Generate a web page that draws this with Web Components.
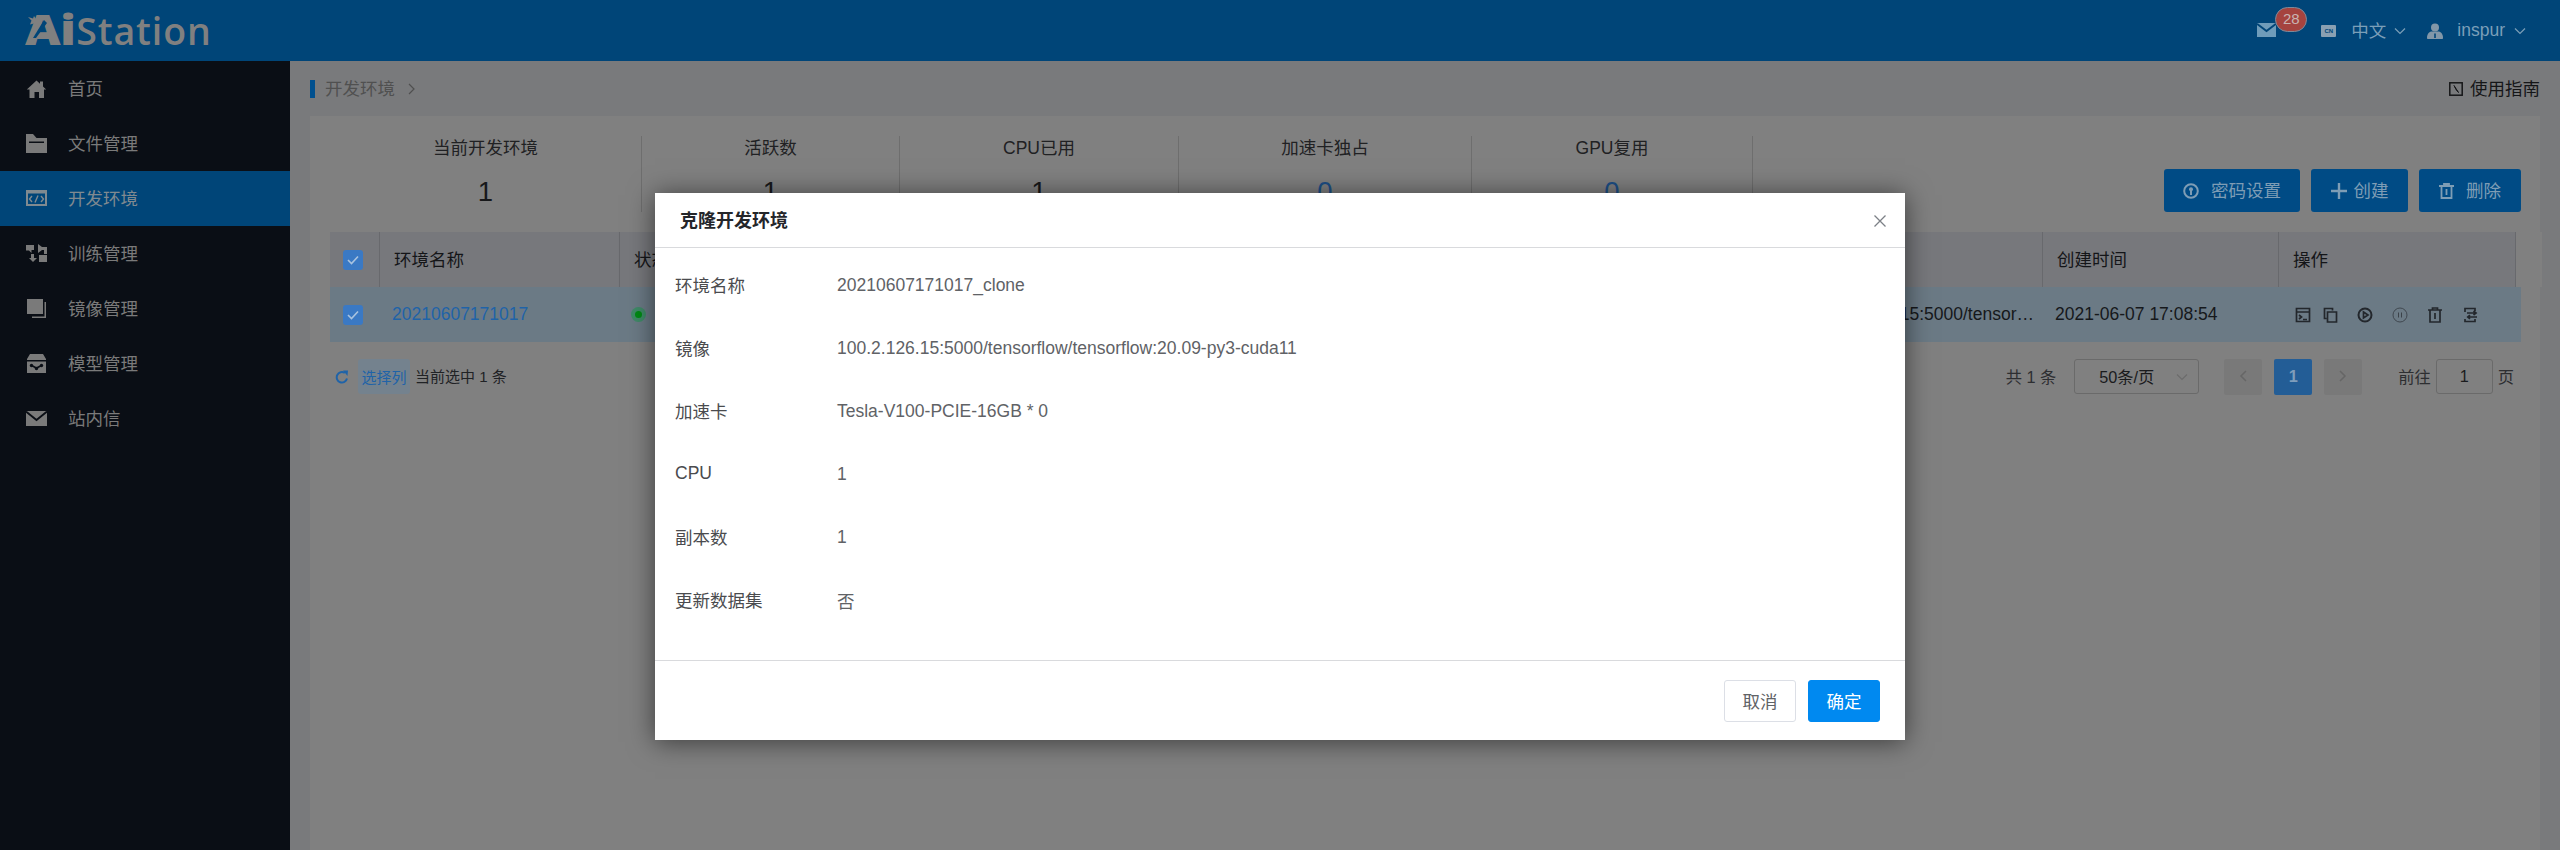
<!DOCTYPE html>
<html lang="zh"><head><meta charset="utf-8"><title>AiStation</title>
<style>
html,body{margin:0;padding:0;height:850px;overflow:hidden;background:#797a7c}
body{font:17.5px "Liberation Sans","Noto Sans CJK SC",sans-serif;color:#1c1d1f}
</style></head><body>
<ai-app></ai-app>
<template id="ic-home"><svg viewBox="0 0 21 21" width="21" height="21"><path fill="currentColor" d="M10.5 2.5 14 5.8V3.5h3v5.1l3.2 3H18V20h-5v-6H8.500v6H3.500v-8.400H.8Z"/></svg></template>
<template id="ic-folder"><svg viewBox="0 0 21 21" width="21" height="21"><path fill="currentColor" d="M0 1h7l3.500 4H21v15H0Z"/><path fill="#0a0e15" d="M3 8.500h15V10H3z"/></svg></template>
<template id="ic-code"><svg viewBox="0 0 21 21" width="21" height="21"><path fill="currentColor" d="M0 2h21v16H0Z"/><path fill="#004578" d="M2 5.500h17V16H2z"/><path fill="none" stroke="currentColor" stroke-width="1.400" d="M6 8 3.500 11 6 14M15 8l2.500 3-2.500 3M12 7.500 9 14.500"/></svg></template>
<template id="ic-train"><svg viewBox="0 0 21 21" width="21" height="21"><path fill="currentColor" d="M0 2h8v5H5.500v3L3 7.500H0ZM12 1l4 3h5v7h-3V7h-2l-4 3ZM13 12h8v7h-8Z"/><path fill="currentColor" d="M5 11h3v4h3l-4 4-4-4h2Z"/></svg></template>
<template id="ic-mirror"><svg viewBox="0 0 21 21" width="21" height="21"><path fill="currentColor" d="M1 1h16v15H1Z"/><path fill="currentColor" d="M18.500 4H20v16H6v-1.500h12.500Z"/></svg></template>
<template id="ic-model"><svg viewBox="0 0 21 21" width="21" height="21"><path fill="currentColor" d="M4 1h13l3 5v14H1V6Z"/><path fill="#0a0e15" d="M1 7h19v1.500H1z"/><path fill="none" stroke="#0a0e15" stroke-width="1.600" d="M5.500 12.500 10.500 15l5-2.500"/><circle cx="5.500" cy="12.500" r="1.700" fill="#0a0e15"/><circle cx="15.500" cy="12.500" r="1.700" fill="#0a0e15"/><circle cx="10.500" cy="15.500" r="1.700" fill="#0a0e15"/></svg></template>
<template id="ic-mail"><svg viewBox="0 0 21 21" width="21" height="21"><path fill="currentColor" d="M0 3h21v15H0Z"/><path fill="none" stroke="#0a0e15" stroke-width="1.800" d="M0 3.500 10.500 12 21 3.500"/></svg></template>

<script>
const $=(h)=>{const t=document.createElement('template');t.innerHTML=h;return t.content};
const ic=(id)=>document.getElementById(id).innerHTML;
class Base extends HTMLElement{
  connectedCallback(){ if(!this.shadowRoot){this.attachShadow({mode:'open'}).append($(this.view()));} }
}
const chev='<svg viewBox="0 0 12 8" width="12" height="8"><path d="M1 1.500 6 6.500 11 1.500" fill="none" stroke="currentColor" stroke-width="1.200"/></svg>';

class AiApp extends Base{view(){return `
<style>:host{display:block;position:relative;width:2560px;height:850px;overflow:hidden}
.body{display:flex;height:789px}</style>
<top-bar></top-bar>
<div class="body"><side-nav></side-nav><main-view></main-view></div>
<clone-dialog></clone-dialog>`}}

class TopBar extends Base{view(){return `
<style>
:host{display:flex;align-items:center;height:61px;background:#004578;color:#7fa3bd;position:relative}
.logo{position:relative;margin-left:25px;color:#808080;font:600 37.5px "Open Sans","Liberation Sans",sans-serif;line-height:61px;margin-top:-3px;letter-spacing:.9px;white-space:nowrap}
.logo b{display:inline-block;font-weight:800;font-size:42px;letter-spacing:-.5px;transform:scaleX(1.17);transform-origin:left;margin-right:8px}
.logo svg{position:absolute;left:0;top:0}
.r{margin-left:auto;display:flex;align-items:center;font-size:17.5px;margin-right:34px;height:61px}
.mail{position:relative;display:flex;margin-right:45px;margin-top:-1px}
.bdg{position:absolute;left:18px;top:-16px;width:32px;height:25px;box-sizing:border-box;border-radius:13px;background:#a5433f;border:1px solid #7d8a9a;color:#c9b4b2;font-size:15px;line-height:22px;text-align:center}
.cn{width:15px;height:12px;background:#8aa0b2;color:#004578;font:700 6px/12px "Liberation Sans",sans-serif;text-align:center;margin-right:15px;border-radius:1px}
.z{color:#7b9fb8}
.zh{padding-bottom:2px}
.c{display:flex;margin-left:8px;color:#7b9fb8}
.u{margin-left:21px;margin-right:14px;display:flex;color:#8297a8}
</style>
<div class="logo"><span><b>Ai</b>Station</span>
<svg width="44" height="61" viewBox="0 0 44 61"><path fill="#004578" d="M19 22 8 40h3l11-15Z"/><path fill="#808080" d="m3 19 5 1.500 1-2.500 2 3 4 1-3 2 .5 3.500-3.500-2-4 1 1.500-4Z"/></svg></div>
<div class="r">
 <div class="mail"><svg width="19" height="14" viewBox="0 0 19 14"><path fill="#6f9cba" d="M0 0h19v14H0Z"/><path fill="none" stroke="#004578" stroke-width="1.800" d="M0 .8 9.500 8 19 .8"/></svg><span class="bdg">28</span></div>
 <div class="cn">CN</div><span class="z zh">中文</span><span class="c">${chev}</span>
 <span class="u"><svg width="16" height="16" viewBox="0 0 16 16"><circle cx="8" cy="4.500" r="4" fill="currentColor"/><path fill="currentColor" d="M0 15c0-4 2-6.500 5-6.500h6c3 0 5 2.500 5 6.500 0 .6-.5 1-1 1H1c-.5 0-1-.4-1-1Z"/><path fill="#004578" d="M7.200 10.500h1.600V15H7.200z"/></svg></span>
 <span class="z">inspur</span><span class="c" style="margin-left:9px">${chev}</span>
</div>`}}

class SideNav extends Base{view(){const it=[['home','首页'],['folder','文件管理'],['code','开发环境',1],['train','训练管理'],['mirror','镜像管理'],['model','模型管理'],['mail','站内信']];
return `<style>
:host{display:block;width:290px;flex:none;background:#0a0e15;color:#7a7a7a}
.i{display:flex;align-items:center;height:55px;padding-left:26px;gap:21px}
.i span{padding-bottom:2px}
.i.on{background:#004578;color:#808a90}
svg{display:block}
</style>${it.map(x=>`<div class="i ${x[2]?'on':''}">${ic('ic-'+x[0])}<span>${x[1]}</span></div>`).join('')}`}}

class MainView extends Base{view(){return `<style>
:host{display:block;flex:1;min-width:0;background:#797a7c}
.cr{height:55px;display:flex;align-items:center;padding:0 20px;box-sizing:border-box;color:#505050}
.bar{width:5px;height:18px;background:#00508f;margin-right:10px}
.cr .t{color:#505050;padding-bottom:2px}
.chv{margin-left:13px;color:#505050;display:flex}
.g{margin-left:auto;display:flex;align-items:center;gap:7px;color:#151618}
.g span{padding-bottom:2px}
</style>
<div class="cr"><i class="bar"></i><span class="t">开发环境</span><span class="chv"><svg width="8" height="12" viewBox="0 0 8 12"><path d="M1 1l5 5-5 5" fill="none" stroke="currentColor" stroke-width="1.200"/></svg></span>
<div class="g"><svg width="14" height="14" viewBox="0 0 14 14"><rect x=".8" y=".8" width="12.400" height="12.400" fill="none" stroke="currentColor" stroke-width="1.500"/><path d="M5 3.500 9.500 10.500 7 7.500Z" fill="currentColor" stroke="currentColor"/></svg><span>使用指南</span></div></div>
<env-card></env-card>`}}

class EnvCard extends Base{view(){return `<style>
:host{display:block;margin:0 20px;height:734px;background:#808080;padding:20px 19px 0 20px;box-sizing:border-box}
.top{display:flex;justify-content:space-between;align-items:flex-end;height:76px;margin-bottom:20px}
.st{display:flex}
.btns{display:flex;gap:11px}
</style>
<div class="top"><div class="st">
<stat-item w="312" label="当前开发环境" val="1"></stat-item>
<stat-item w="258" label="活跃数" val="1"></stat-item>
<stat-item w="279" label="CPU已用" val="1"></stat-item>
<stat-item w="293" label="加速卡独占" val="0" blue></stat-item>
<stat-item w="281" label="GPU复用" val="0" blue></stat-item>
</div><div class="btns">
<tool-btn w="136" gap="12" icon="key">密码设置</tool-btn>
<tool-btn w="97" gap="7" icon="plus">创建</tool-btn>
<tool-btn w="102" gap="12" icon="trash">删除</tool-btn>
</div></div>
<env-table></env-table>
<table-foot></table-foot>`}}

class StatItem extends Base{view(){const b=this.hasAttribute('blue');return `<style>
:host{display:block;width:${this.getAttribute('w')}px;box-sizing:border-box;border-right:1px solid #6e6e6e;height:76px;text-align:center}
.l{line-height:24px;color:#202123}
.v{font-size:27.500px;line-height:32px;margin-top:16px;color:${b?'#1d4f86':'#17181a'}}
</style><div class="l">${this.getAttribute('label')}</div><div class="v">${this.getAttribute('val')}</div>`}}

const btnIc={
 key:'<svg width="16" height="16" viewBox="0 0 16 16"><circle cx="8" cy="8" r="6.800" fill="none" stroke="currentColor" stroke-width="2"/><circle cx="8" cy="6.300" r="2" fill="currentColor"/><path fill="currentColor" d="M7 7h2v5H7z"/></svg>',
 plus:'<svg width="16" height="16" viewBox="0 0 16 16"><path fill="currentColor" d="M6.800 0h2.400v6.800H16v2.400H9.200V16H6.800V9.200H0V6.800h6.800Z"/></svg>',
 trash:'<svg width="15" height="16" viewBox="0 0 15 16"><path fill="none" stroke="currentColor" stroke-width="1.800" d="M0 3h15M5 3V1h5v2M2.500 3v12h10V3M7.500 6v6"/></svg>'};
class ToolBtn extends Base{view(){return `<style>
:host{display:flex;align-items:center;justify-content:center;gap:${this.getAttribute('gap')}px;width:${this.getAttribute('w')}px;height:43px;background:#004b85;border-radius:3px;color:#7e9db5}
svg{display:block}
span{padding-bottom:2px}
</style>${btnIc[this.getAttribute('icon')]}<span><slot></slot></span>`}}

const opIc=[
'<path d="M1.500 1.500h13v13h-13ZM1.500 5h13M4 8l2.500 2L4 12M8 12.500h4"/>',
'<path d="M10.500 3.500V1.500h-8v10h2M5.500 5h9v10h-9Z"/>',
'<circle cx="8" cy="8" r="6.500" stroke-width="2"/><path d="M6.500 5 11 8l-4.500 3Z"/>',
'<circle cx="8" cy="8" r="7" stroke-width=".9"/><path d="M6.500 5.500v5M9.500 5.500v5" stroke-width="1"/>',
'<path d="M1 3h14M5.500 3V1h5v2M3 3v12h10V3M8 6v6"/>',
'<path d="M3 5V1.500h10V4M3 12v2.500h10V12M5 6h9M11.500 4l2.500 2-2.500 2M15 10H6M8 8.200 5.800 10 8 11.800"/>'];
class EnvTable extends Base{view(){
const cols='50px 240px 200px 983px 240px 236px 237px 5px';
const box='<span class="cb"><svg width="12" height="10" viewBox="0 0 12 10"><path d="M1 5l3.500 3.500L11 1.500" fill="none" stroke="#a9c3df" stroke-width="1.600"/></svg></span>';
return `<style>
:host{display:block;width:2191px}
.r{display:grid;grid-template-columns:${cols};height:55px}
.h{background:#77787c;color:#141518}
.b{background:#6b7a85;color:#16181b}
.c{box-sizing:border-box;padding:0 12px;display:flex;align-items:center;white-space:nowrap;overflow:hidden;min-width:0}
.h .c{border-right:1px solid #68696d;padding:0 12px 2px 14px}
.h .c:last-child{border:0}
.c.c0,.h .c.c0{padding:0 0 0 13px}
.cb{width:20px;height:20px;border-radius:3px;background:#3a79c4;display:flex;align-items:center;justify-content:center}
a{color:#1f63a8;text-decoration:none}
.dot{width:15px;height:15px;border-radius:50%;background:#3f8a67;display:flex;align-items:center;justify-content:center;margin-left:-1px}
.dot i{width:7px;height:7px;border-radius:50%;background:#008a14}
.img{display:block;padding:0 5px 0 14px;overflow:hidden;text-overflow:ellipsis;line-height:55px}
.ops{padding-left:16px}
.ops svg{width:16px;height:16px;fill:none;stroke:#23272c;stroke-width:1.700;display:block;margin-right:19px;flex:none}
.ops svg:first-child{margin-right:11px}
.ops svg.p{stroke:#3b4249}
</style>
<div class="r h"><div class="c c0">${box}</div><div class="c">环境名称</div><div class="c">状态</div><div class="c"></div><div class="c">镜像</div><div class="c">创建时间</div><div class="c">操作</div><div class="c" style="background:#808080"></div></div>
<div class="r b"><div class="c c0">${box}</div><div class="c"><a>20210607171017</a></div><div class="c"><span class="dot"><i></i></span></div><div class="c"></div><div class="c img">100.2.126.15:5000/tensorflow/tensorflow:20.09-py3-cuda11</div><div class="c">2021-06-07 17:08:54</div><div class="c ops">${opIc.map((p,i)=>`<svg viewBox="0 0 16 16" class="${i==3?'p':''}">${p}</svg>`).join('')}</div><div class="c"></div></div>`}}

class TableFoot extends Base{view(){return `<style>
:host{display:flex;align-items:center;height:35px;margin-top:17px;width:2191px;font-size:15px;color:#202225}
.rf{margin-left:5px;display:flex;color:#1f63a8}
.chip{margin-left:9px;width:52px;height:35px;border-radius:3px;background:#74828e;color:#1f63a8;display:flex;align-items:center;justify-content:center}
.n{margin-left:5px;padding-bottom:2px}
.p{margin-left:auto;display:flex;align-items:center;font-size:16.250px;color:#2d2e31}
.p>span{padding-bottom:1px}
.sel{margin-left:18px;width:125px;height:35px;box-sizing:border-box;border:1px solid #6a6a6a;border-radius:3px;display:flex;align-items:center;padding-left:24px;color:#1a1b1d;position:relative}
.sel svg{position:absolute;right:10px;top:13px;color:#6c6c6c}
.pg{width:38px;height:35px;border-radius:2px;background:#797979;color:#666;display:flex;align-items:center;justify-content:center}
.pg.on{background:#235d96;color:#7f9dbb;font-weight:700;margin:0 12px}
.in{width:57px;height:35px;box-sizing:border-box;border:1px solid #6a6a6a;border-radius:3px;margin:0 5px;display:flex;align-items:center;justify-content:center;color:#1a1b1d}
.go{margin-left:36px}
</style>
<span class="rf"><svg width="14" height="14" viewBox="0 0 14 14"><path d="M12 8.500A5.200 5.200 0 1 1 9.800 3" fill="none" stroke="currentColor" stroke-width="2"/><path fill="currentColor" d="M8 .5 13 .5 12.500 6Z"/></svg></span>
<span class="chip">选择列</span><span class="n">当前选中 1 条</span>
<div class="p"><span>共 1 条</span><span class="sel">50条/页 ${chev}</span><span style="width:25px"></span>
<span class="pg"><svg width="8" height="12" viewBox="0 0 8 12"><path d="M7 1 2 6l5 5" fill="none" stroke="currentColor" stroke-width="1.500"/></svg></span><span class="pg on">1</span><span class="pg"><svg width="8" height="12" viewBox="0 0 8 12"><path d="M1 1l5 5-5 5" fill="none" stroke="currentColor" stroke-width="1.500"/></svg></span>
<span class="go">前往</span><span class="in">1</span><span>页</span><span style="width:7px"></span></div>`}}

class CloneDialog extends Base{view(){return `<style>
:host{display:block;position:absolute;left:655px;top:193px;width:1250px;height:547px;background:#fff;box-shadow:0 2px 25px rgba(0,0,0,.55)}
.h{height:54px;border-bottom:1px solid #d9dadd;display:flex;align-items:center;padding:0 18px 0 25px;font-weight:700;color:#24262a;font-size:18px}
.t{padding-bottom:2px}
.x{margin-left:auto;display:flex;color:#7c8086;padding-top:1px}
.m{height:413px;padding:6px 0 0 20px;box-sizing:border-box;border-bottom:1px solid #d9dadd}
.f{display:flex;justify-content:flex-end;gap:12px;padding:19px 25px 0 0}
button{width:72px;height:42px;border-radius:3px;font:inherit;font-size:17.500px;border:1px solid #dcdfe6;background:#fff;color:#606266;padding:0 0 2px}
button.ok{background:#0089f0;border-color:#0089f0;color:#fff}
</style>
<div class="h"><span class="t">克隆开发环境</span><span class="x"><svg width="14" height="14" viewBox="0 0 14 14"><path d="M1.500 1.500l11 11M12.500 1.500l-11 11" fill="none" stroke="currentColor" stroke-width="1.300"/></svg></span></div>
<div class="m">
<kv-row k="环境名称">20210607171017_clone</kv-row>
<kv-row k="镜像">100.2.126.15:5000/tensorflow/tensorflow:20.09-py3-cuda11</kv-row>
<kv-row k="加速卡">Tesla-V100-PCIE-16GB * 0</kv-row>
<kv-row k="CPU">1</kv-row>
<kv-row k="副本数">1</kv-row>
<kv-row k="更新数据集">否</kv-row>
</div>
<div class="f"><button>取消</button><button class="ok">确定</button></div>`}}

class KvRow extends Base{view(){return `<style>
:host{display:flex;align-items:center;height:63px;color:#606266}
.k{width:162px;color:#4a4b4e;padding-bottom:2px}
</style><span class="k">${this.getAttribute('k')}</span><span><slot></slot></span>`}}

[['ai-app',AiApp],['top-bar',TopBar],['side-nav',SideNav],['main-view',MainView],['env-card',EnvCard],['stat-item',StatItem],['tool-btn',ToolBtn],['env-table',EnvTable],['table-foot',TableFoot],['clone-dialog',CloneDialog],['kv-row',KvRow]].forEach(([n,c])=>customElements.define(n,c));
</script>
</body></html>
